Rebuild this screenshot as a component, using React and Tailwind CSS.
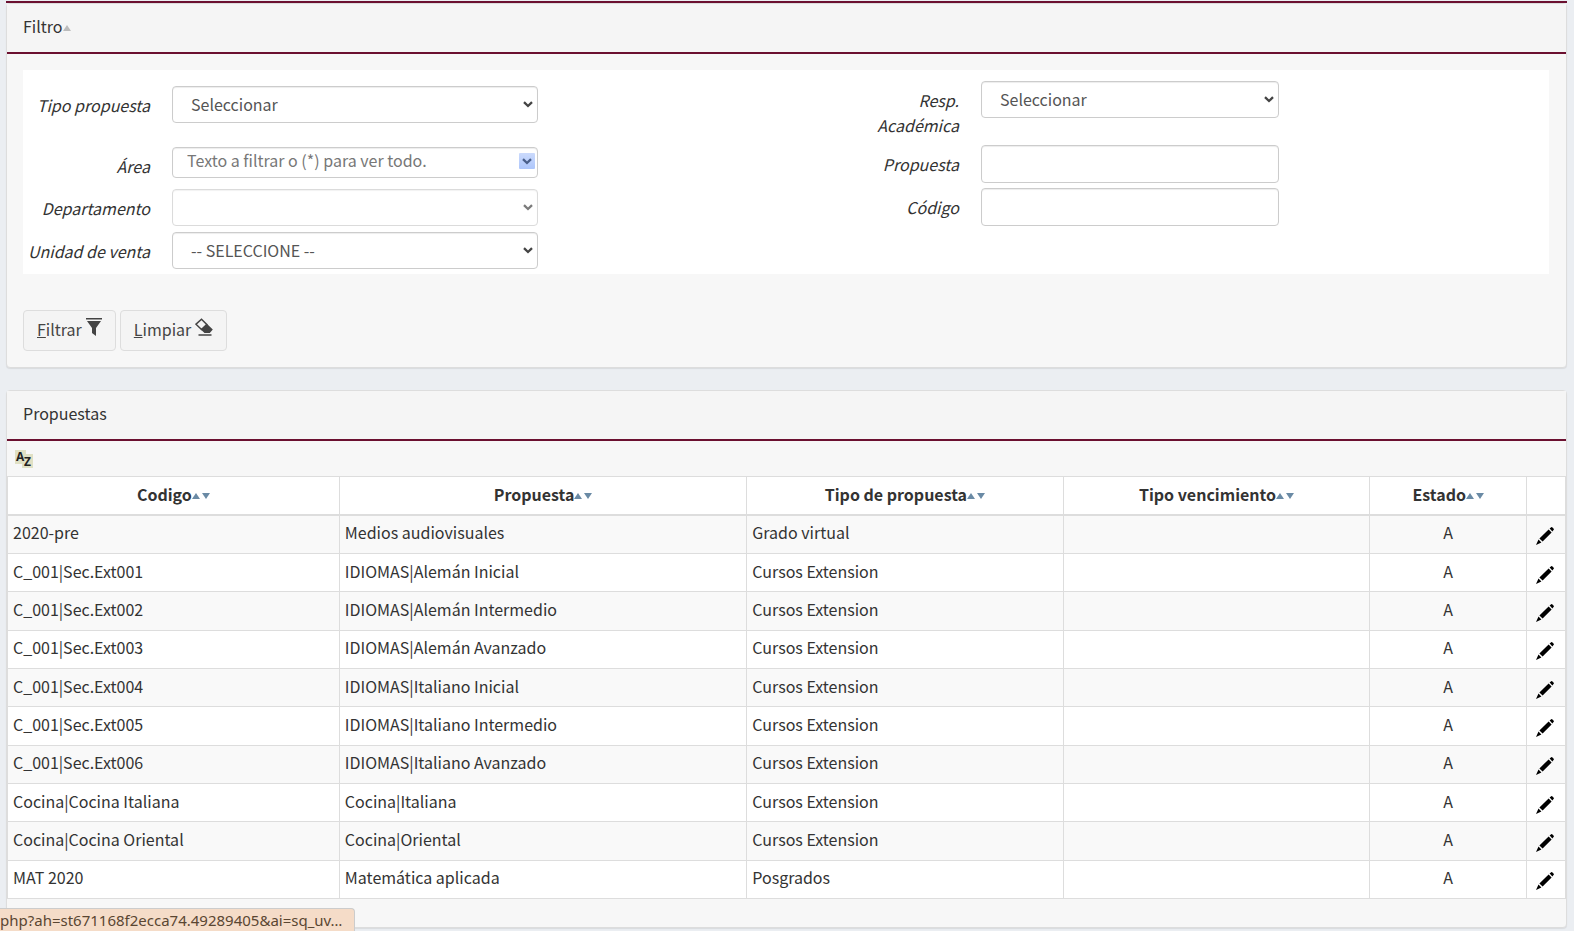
const columns = [
  { title: 'Codigo', width: 'w-[21.3%]' },
  { title: 'Propuesta', width: 'w-[26.15%]' },
  { title: 'Tipo de propuesta', width: 'w-[20.3%]' },
  { title: 'Tipo vencimiento', width: 'w-[19.7%]' },
  { title: 'Estado', width: 'w-[10.05%]' },
]

const rows = [
  ['2020-pre', 'Medios audiovisuales', 'Grado virtual'],
  ['C_001|Sec.Ext001', 'IDIOMAS|Alemán Inicial', 'Cursos Extension'],
  ['C_001|Sec.Ext002', 'IDIOMAS|Alemán Intermedio', 'Cursos Extension'],
  ['C_001|Sec.Ext003', 'IDIOMAS|Alemán Avanzado', 'Cursos Extension'],
  ['C_001|Sec.Ext004', 'IDIOMAS|Italiano Inicial', 'Cursos Extension'],
  ['C_001|Sec.Ext005', 'IDIOMAS|Italiano Intermedio', 'Cursos Extension'],
  ['C_001|Sec.Ext006', 'IDIOMAS|Italiano Avanzado', 'Cursos Extension'],
  ['Cocina|Cocina Italiana', 'Cocina|Italiana', 'Cursos Extension'],
  ['Cocina|Cocina Oriental', 'Cocina|Oriental', 'Cursos Extension'],
  ['MAT 2020', 'Matemática aplicada', 'Posgrados'],
]

const control =
  'block w-full rounded-sm border border-[#ccc] bg-white text-[#555] shadow-[inset_0_1px_1px_rgba(0,0,0,0.075)]'

const button =
  'flex h-[41px] items-center gap-1 rounded-sm border border-[#ddd] bg-[#f4f4f4] px-[13px] pb-1 text-[#444]'

const cell = 'border border-[#ddd] px-[5px] pb-1'

function Triangle({ down = false, className }) {
  return (
    <svg viewBox="0 0 8 6" className={className} aria-hidden="true">
      <path d={down ? 'M0 0h8L4 6z' : 'M4 0l4 6H0z'} fill="currentColor" />
    </svg>
  )
}

function Chevron({ className }) {
  return (
    <svg viewBox="0 0 10 7" className={className} fill="none" stroke="currentColor" strokeWidth="2.3" aria-hidden="true">
      <path d="M1 1.2l4 3.8 4-3.8" />
    </svg>
  )
}

function Field({ id, label, className = '', children }) {
  return (
    <div className={`flex items-start ${className}`}>
      <label htmlFor={id} className="w-[127px] shrink-0 pt-[7px] text-right italic leading-[25px] text-[#333]">
        {label}
      </label>
      <div className="ml-[22px] min-w-0 flex-1">{children}</div>
    </div>
  )
}

function Select({ id, text = '', disabled = false }) {
  return (
    <div className={`relative ${disabled ? 'opacity-70' : ''}`}>
      <select id={id} disabled={disabled} className={`${control} h-[37px] appearance-none px-[18px] pb-[2px]`}>
        <option>{text}</option>
      </select>
      <Chevron className="pointer-events-none absolute right-[5px] top-[15px] h-[7px] w-[10px] text-[#444]" />
    </div>
  )
}

function Panel({ title, extra, children }) {
  return (
    <section className="rounded-sm border border-[#ddd] bg-[#f7f7f7] shadow-[0_1px_1px_rgba(0,0,0,0.08)]">
      <header className="flex items-center border-b-2 border-[#6b1030] bg-[#f5f5f5] px-4 pb-[14px] pt-[10px]">
        <h2 className="leading-6 text-[#333]">{title}</h2>
        {extra}
      </header>
      {children}
    </section>
  )
}

function FilterIcon() {
  return (
    <svg viewBox="0 0 16 18" className="mb-1 h-[18px] w-4" fill="#444" aria-hidden="true">
      <path d="M0 0h16v1.6H0zM1 3h14l-5 7v8l-4-3v-5z" />
    </svg>
  )
}

function EraserIcon() {
  return (
    <svg viewBox="0 0 18 18" className="mb-1 h-[18px] w-[18px]" aria-hidden="true">
      <path d="M6.5 1.2l5.3 5.3-5.3 5L1 6.2z" fill="#f5f5f5" stroke="#444" strokeWidth="1.5" />
      <path d="M11.8 5.8l6 5.7-3 3.5H9.5L5.8 11.5zM3.5 16.2h13v1.5h-13z" fill="#444" />
    </svg>
  )
}

function SortIcon() {
  return (
    <svg
      viewBox="0 0 18 18"
      className="h-[18px] w-[18px] overflow-visible font-['Open_Sans',sans-serif] text-[12px] font-bold"
      fill="#222"
      aria-hidden="true"
    >
      <path d="M0 0h11v4h7v14H7v-4H0z" fill="#e0e0c4" />
      <text x="1" y="11">A</text>
      <text x="9" y="16">Z</text>
    </svg>
  )
}

function PencilIcon() {
  return (
    <svg viewBox="0 0 18 18" className="h-[18px] w-[18px]" fill="#000" aria-hidden="true">
      <path d="M13.6 1.6L15.2 0.2q.5-.4 1 0l1.5 1.6q.5.5 0 1L16.4 4.4zM12.6 2.4l3 3-9 9.2-3.2-3.2zM2.5 12.6l2.9 2.9L0 18z" />
    </svg>
  )
}

export default function App() {
  return (
    <div className="min-h-screen bg-[#ebeef2] pl-[6px] pr-[7px] pt-px font-['Noto_Sans_CJK_SC',sans-serif] text-[16px] leading-6 text-[#333]">
      <div className="h-[2px] bg-[#6b1030]" />
      <main className="flex flex-col gap-[22px]">
        <Panel title="Filtro" extra={<Triangle className="mt-1 h-[6px] w-2 text-[#bbb]" />}>
          <form className="py-4 pl-4 pr-[17px]">
            <div className="grid grid-cols-2 bg-white pb-[5px] pt-[11px]">
              <div className="w-[515px] pt-[5px]">
                <Field id="tipo" label="Tipo propuesta" className="mb-6">
                  <Select id="tipo" text="Seleccionar" />
                </Field>
                <Field id="area" label="Área" className="mb-[10px]">
                  <div className="relative">
                    <input
                      id="area"
                      placeholder="Texto a filtrar o (*) para ver todo."
                      className={`${control} h-[31px] px-[14px] pb-[5px] placeholder:text-[#777]`}
                    />
                    <button
                      type="button"
                      aria-label="Ver opciones"
                      className="absolute right-[3px] top-[6px] flex h-4 w-4 items-center justify-center rounded-[1px] bg-linear-to-b from-[#cbdafc] to-[#adc6fb]"
                    >
                      <Chevron className="h-[7px] w-[10px] text-[#4a5f8a]" />
                    </button>
                  </div>
                </Field>
                <Field id="depto" label="Departamento" className="mb-[6px]">
                  <Select id="depto" disabled />
                </Field>
                <Field id="unidad" label="Unidad de venta">
                  <Select id="unidad" text="-- SELECCIONE --" />
                </Field>
              </div>
              <div className="ml-[46px] w-[447px]">
                <Field id="resp" label={<>Resp.<br />Académica</>} className="mb-[7px]">
                  <Select id="resp" text="Seleccionar" />
                </Field>
                <Field id="propuesta" label="Propuesta" className="mb-[5px]">
                  <input id="propuesta" className={`${control} h-[38px] px-3`} />
                </Field>
                <Field id="codigo" label="Código">
                  <input id="codigo" className={`${control} h-[38px] px-3`} />
                </Field>
              </div>
            </div>
            <div className="mt-9 flex gap-1">
              <button type="button" className={button}>
                <span><u>F</u>iltrar</span>
                <FilterIcon />
              </button>
              <button type="button" className={button}>
                <span><u>L</u>impiar</span>
                <EraserIcon />
              </button>
            </div>
          </form>
        </Panel>

        <Panel title="Propuestas">
          <div className="flex h-[35px] items-center pl-2">
            <button type="button" aria-label="Ordenar">
              <SortIcon />
            </button>
          </div>
          <table className="h-[423px] w-full table-fixed border-collapse border border-[#ddd] bg-white">
            <thead>
              <tr className="h-[38px]">
                {columns.map((col) => (
                  <th key={col.title} className={`${col.width} border border-b-2 border-[#ddd] pb-[2px] font-bold`}>
                    <span className="flex items-center justify-center">
                      {col.title}
                      <Triangle className="mt-1 h-[6px] w-2 text-[#6a8aa5]" />
                      <Triangle down className="ml-[2px] mt-1 h-[6px] w-2 text-[#6a8aa5]" />
                    </span>
                  </th>
                ))}
                <th className="border border-b-2 border-[#ddd]" />
              </tr>
            </thead>
            <tbody>
              {rows.map(([codigo, propuesta, tipo]) => (
                <tr key={codigo} className="odd:bg-[#f9f9f9]">
                  <td className={cell}>{codigo}</td>
                  <td className={cell}>{propuesta}</td>
                  <td className={cell}>{tipo}</td>
                  <td className={cell} />
                  <td className={`${cell} text-center`}>A</td>
                  <td className="border border-[#ddd] pl-[9px] pt-1">
                    <button type="button" aria-label="Editar" className="block">
                      <PencilIcon />
                    </button>
                  </td>
                </tr>
              ))}
            </tbody>
          </table>
          <div className="h-7" />
        </Panel>
      </main>
      <div className="fixed bottom-0 left-0 h-[23px] w-[355px] overflow-hidden rounded-tr-sm border-r border-t border-[#ccc] bg-[#f5dcc8] font-['Noto_Sans',sans-serif] text-[15px] leading-[22px] text-[#5a4632]">
        php?ah=st671168f2ecca74.49289405&ai=sq_uv…
      </div>
    </div>
  )
}
